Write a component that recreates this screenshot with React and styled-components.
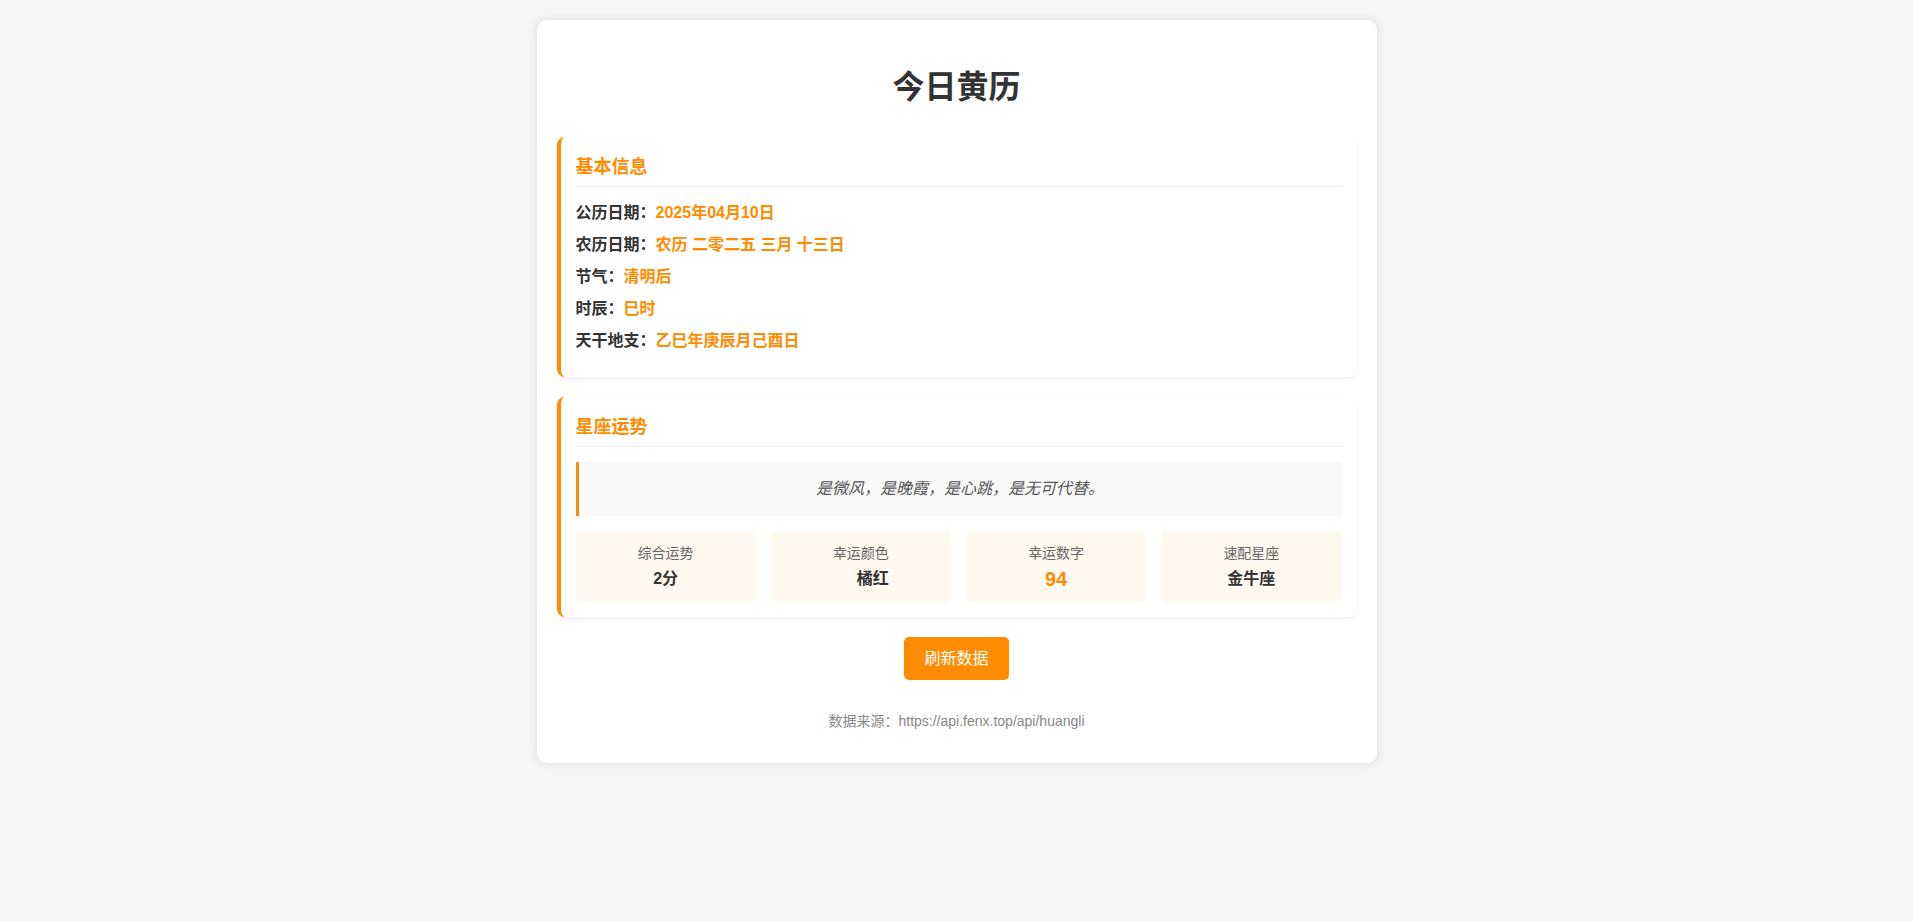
import React from 'react'
import styled, { createGlobalStyle, css } from 'styled-components'

const orange = '#ff8c00'

const GlobalStyle = createGlobalStyle`
  body {
    margin: 0;
    padding: 20px;
    background: #f5f5f5;
    color: #333;
    font-family: "Liberation Sans", Arial, "Noto Sans CJK SC", sans-serif;
  }
`

const Card = styled.div`
  max-width: 800px;
  margin: 0 auto;
  padding: 20px;
  background: #fff;
  border-radius: 10px;
  box-shadow: 0 0 10px rgba(0, 0, 0, 0.1);
`

const Title = styled.h1`
  margin: 24px 0 27px;
  font-size: 32px;
  line-height: 46px;
  font-weight: 700;
  text-align: center;
  color: #333;
`

const Section = styled.section`
  margin-bottom: 20px;
  padding: 15px;
  background: #fff;
  border-left: 4px solid ${orange};
  border-radius: 8px;
  box-shadow: 0 2px 5px rgba(0, 0, 0, 0.06);
`

const SectionTitle = styled.h2`
  margin: 0 0 15px;
  padding: 3px 0 7px;
  font-size: 18px;
  line-height: 24px;
  font-weight: 700;
  color: ${orange};
  border-bottom: 1px solid #eee;
`

const Row = styled.p`
  margin: 10px 0;
  font-size: 16px;
  line-height: 22px;
  font-weight: 700;
  color: #333;

  span {
    color: ${orange};
  }
`

const Quote = styled.div`
  margin-bottom: 15px;
  padding: 15px;
  background: #f9f9f9;
  border-left: 3px solid ${orange};
  border-radius: 0 4px 4px 0;
  font-size: 16px;
  line-height: 24px;
  font-style: italic;
  text-align: center;
  color: #555;
`

const Stats = styled.div`
  display: grid;
  grid-template-columns: repeat(4, 1fr);
  gap: 15px;
`

const Stat = styled.div`
  padding: 12px;
  background: #fff9f0;
  border-radius: 6px;
  text-align: center;
`

const StatLabel = styled.div`
  font-size: 14px;
  line-height: 20px;
  color: #666;
`

const StatValue = styled.div`
  margin-top: 5px;
  font-size: 16px;
  line-height: 22px;
  font-weight: 700;
  color: #333;
  ${({ highlight }) => highlight && css`
    font-size: 20px;
    color: ${orange};
  `}
`

const Swatch = styled.span`
  display: inline-block;
  width: 16px;
  height: 16px;
  margin-right: 8px;
  vertical-align: -2px;
  border-radius: 50%;
  background: ${({ color }) => color};
`

const Actions = styled.div`
  text-align: center;
`

const RefreshButton = styled.button`
  padding: 10px 20px;
  border: none;
  border-radius: 5px;
  background: ${orange};
  color: #fff;
  font-family: inherit;
  font-size: 16px;
  line-height: 23px;
  cursor: pointer;
`

const Footer = styled.div`
  margin: 31px 0 12px;
  font-size: 14px;
  line-height: 20px;
  text-align: center;
  color: #888;
`

const basicInfo = [
  ['公历日期', '2025年04月10日'],
  ['农历日期', '农历 二零二五 三月 十三日'],
  ['节气', '清明后'],
  ['时辰', '巳时'],
  ['天干地支', '乙巳年庚辰月己酉日'],
]

export default function App() {
  return (
    <>
      <GlobalStyle />
      <Card>
        <Title>今日黄历</Title>

        <Section>
          <SectionTitle>基本信息</SectionTitle>
          {basicInfo.map(([label, value]) => (
            <Row key={label}>
              {label}：<span>{value}</span>
            </Row>
          ))}
        </Section>

        <Section>
          <SectionTitle>星座运势</SectionTitle>
          <Quote>是微风，是晚霞，是心跳，是无可代替。</Quote>
          <Stats>
            <Stat>
              <StatLabel>综合运势</StatLabel>
              <StatValue>2分</StatValue>
            </Stat>
            <Stat>
              <StatLabel>幸运颜色</StatLabel>
              <StatValue>
                <Swatch color="transparent" />橘红
              </StatValue>
            </Stat>
            <Stat>
              <StatLabel>幸运数字</StatLabel>
              <StatValue highlight>94</StatValue>
            </Stat>
            <Stat>
              <StatLabel>速配星座</StatLabel>
              <StatValue>金牛座</StatValue>
            </Stat>
          </Stats>
        </Section>

        <Actions>
          <RefreshButton>刷新数据</RefreshButton>
        </Actions>

        <Footer>数据来源：https://api.fenx.top/api/huangli</Footer>
      </Card>
    </>
  )
}
